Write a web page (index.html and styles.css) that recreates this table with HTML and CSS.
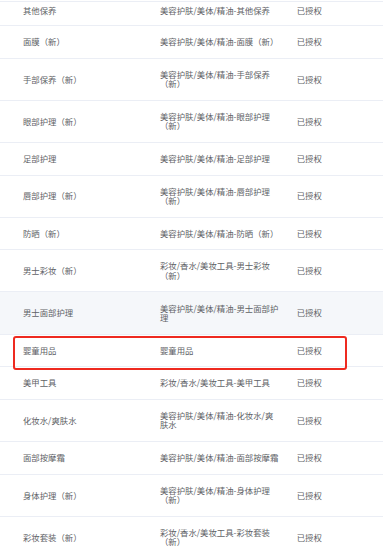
FILE: index.html
```html
<!DOCTYPE html>
<html lang="zh-CN">
<head>
<meta charset="utf-8">
<title>类目授权</title>
<link rel="stylesheet" href="styles.css">
</head>
<body>
<div class="list">
  <div class="row first"><div class="c1">其他保养</div><div class="c2">美容护肤/美体/精油-其他保养</div><div class="c3">已授权</div></div>
  <div class="row"><div class="c1">面膜（新）</div><div class="c2">美容护肤/美体/精油-面膜（新）</div><div class="c3">已授权</div></div>
  <div class="row"><div class="c1">手部保养（新）</div><div class="c2">美容护肤/美体/精油-手部保养（新）</div><div class="c3">已授权</div></div>
  <div class="row"><div class="c1">眼部护理（新）</div><div class="c2">美容护肤/美体/精油-眼部护理（新）</div><div class="c3">已授权</div></div>
  <div class="row"><div class="c1">足部护理</div><div class="c2">美容护肤/美体/精油-足部护理</div><div class="c3">已授权</div></div>
  <div class="row"><div class="c1">唇部护理（新）</div><div class="c2">美容护肤/美体/精油-唇部护理（新）</div><div class="c3">已授权</div></div>
  <div class="row"><div class="c1">防晒（新）</div><div class="c2">美容护肤/美体/精油-防晒（新）</div><div class="c3">已授权</div></div>
  <div class="row"><div class="c1">男士彩妆（新）</div><div class="c2">彩妆/香水/美妆工具-男士彩妆（新）</div><div class="c3">已授权</div></div>
  <div class="row hover"><div class="c1">男士面部护理</div><div class="c2">美容护肤/美体/精油-男士面部护理</div><div class="c3">已授权</div></div>
  <div class="row marked"><div class="c1">婴童用品</div><div class="c2">婴童用品</div><div class="c3">已授权</div><div class="mark"></div></div>
  <div class="row"><div class="c1">美甲工具</div><div class="c2">彩妆/香水/美妆工具-美甲工具</div><div class="c3">已授权</div></div>
  <div class="row"><div class="c1">化妆水/爽肤水</div><div class="c2">美容护肤/美体/精油-化妆水/爽肤水</div><div class="c3">已授权</div></div>
  <div class="row"><div class="c1">面部按摩霜</div><div class="c2">美容护肤/美体/精油-面部按摩霜</div><div class="c3">已授权</div></div>
  <div class="row"><div class="c1">身体护理（新）</div><div class="c2">美容护肤/美体/精油-身体护理（新）</div><div class="c3">已授权</div></div>
  <div class="row"><div class="c1">彩妆套装（新）</div><div class="c2">彩妆/香水/美妆工具-彩妆套装（新）</div><div class="c3">已授权</div></div>
</div>
</body>
</html>
```

FILE: styles.css
```css
html, body {
  margin: 0;
  padding: 0;
  background: #ffffff;
  overflow: hidden;
  height: 550px;
}

body {
  font-family: "Noto Sans CJK SC", "Noto Sans", sans-serif;
  font-size: 8.4px;
  line-height: 9.4px;
  color: #606266;
}

.list {
  margin-top: 1px;
  border-top: 1px solid #ebeef5;
}

.row {
  display: grid;
  grid-template-columns: 137px 136.7px 1fr;
  align-items: center;
  padding: 11.15px 0 11.15px 23px;
  border-bottom: 1px solid #ebeef5;
}

.row.first {
  padding-top: 4px;
  padding-bottom: 9.6px;
}

.c2 {
  padding-right: 15.5px;
}

.hover {
  background: #f5f7fa;
}

.marked {
  position: relative;
}

.mark {
  position: absolute;
  left: 12.5px;
  top: 1px;
  width: 334.5px;
  height: 34px;
  box-sizing: border-box;
  border: 2.6px solid #ee2a20;
  border-radius: 3px;
}
```
